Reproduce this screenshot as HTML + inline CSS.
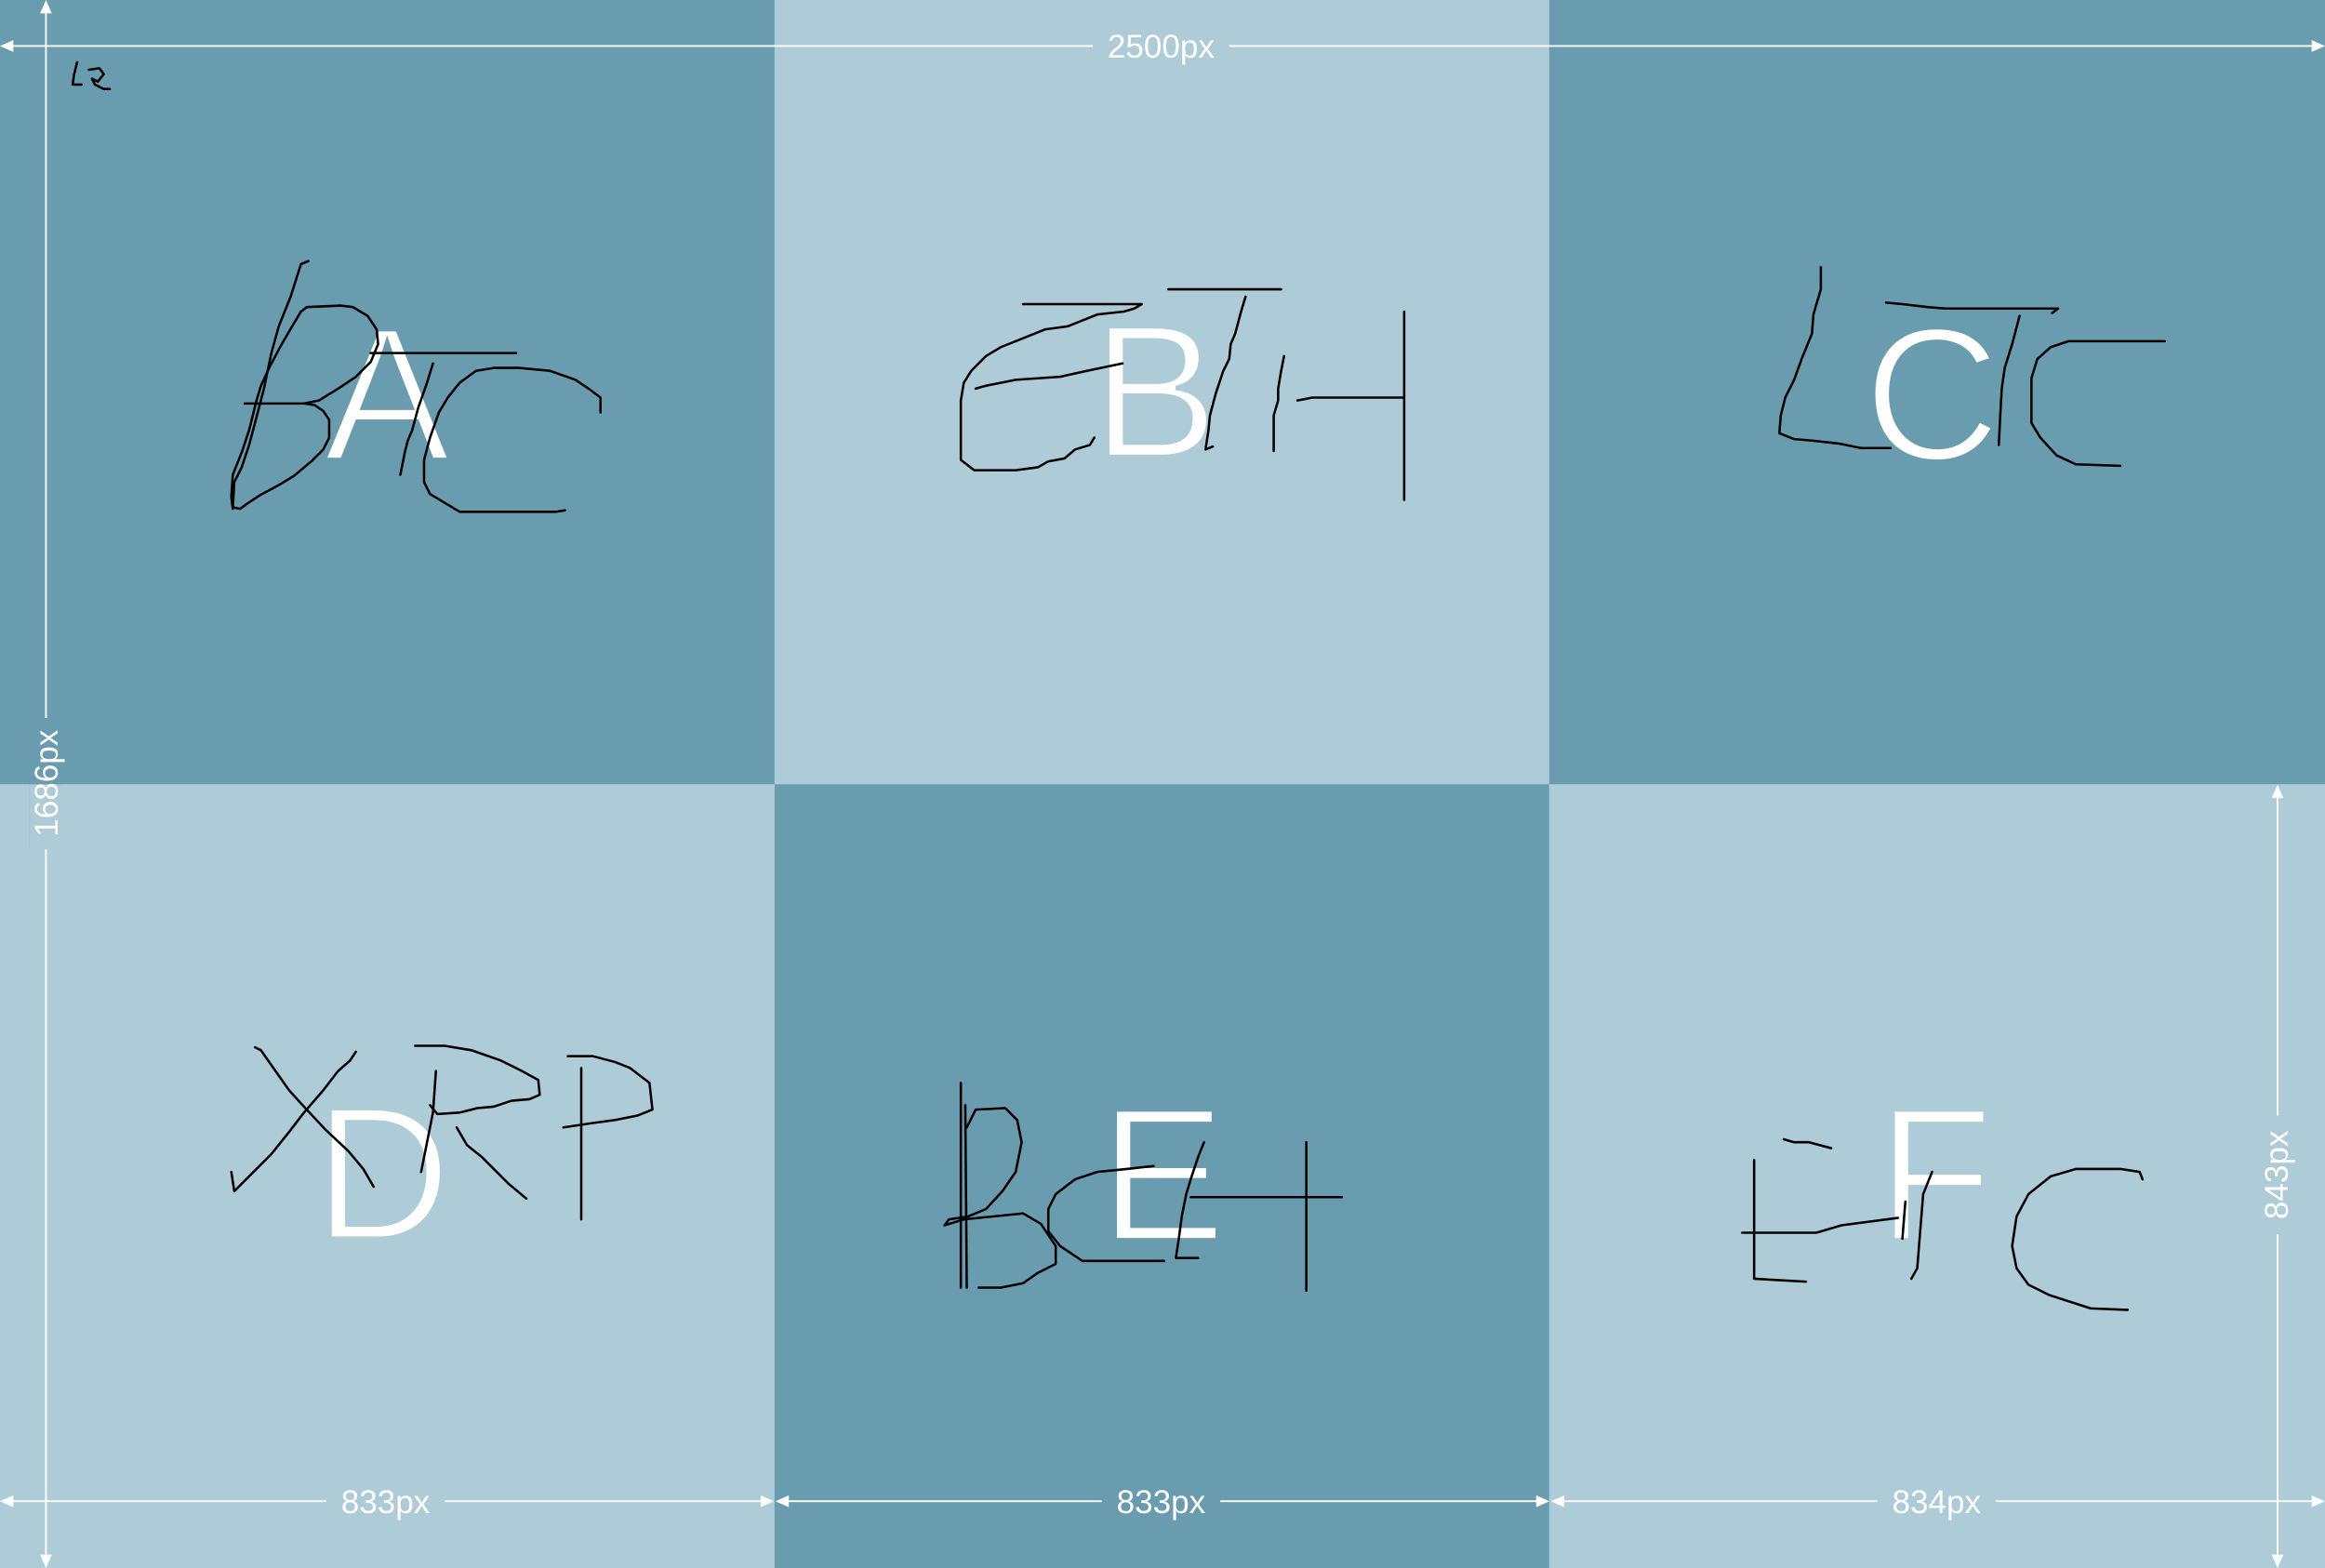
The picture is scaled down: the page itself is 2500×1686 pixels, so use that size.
<!DOCTYPE html>
<html><head><meta charset="utf-8"><style>
html,body{margin:0;padding:0;width:2500px;height:1686px;overflow:hidden;background:#aecbd8}
svg{display:block}
</style></head><body>
<svg width="2500" height="1686" viewBox="0 0 1568 1057" preserveAspectRatio="none" xmlns="http://www.w3.org/2000/svg">
<rect x="0" y="0" width="522.4" height="528.7" fill="#6a9caf"/>
<rect x="522.4" y="0" width="522.4" height="528.7" fill="#aecbd8"/>
<rect x="1044.8" y="0" width="523.2" height="528.7" fill="#6a9caf"/>
<rect x="0" y="528.7" width="522.4" height="528.3" fill="#aecbd8"/>
<rect x="522.4" y="528.7" width="522.4" height="528.3" fill="#6a9caf"/>
<rect x="1044.8" y="528.7" width="523.2" height="528.3" fill="#aecbd8"/>

<g font-family="Liberation Sans, sans-serif" font-size="128" fill="#fff" text-anchor="middle" font-weight="normal" stroke-width="3">
<text x="261" y="310" stroke="#6a9caf">A</text>
<text x="779" y="308" stroke="#aecbd8">B</text>
<text x="1303" y="310" stroke="#6a9caf">C</text>
<text x="258" y="835" stroke="#aecbd8">D</text>
<text x="784" y="836" stroke="#6a9caf">E</text>
<text x="1305" y="836" stroke="#aecbd8">F</text>
</g>

<g fill="none" stroke="#000" stroke-width="1.6" stroke-linejoin="round" stroke-linecap="round">
<path d="M52,42 L50,50 L49,57 L55,57 M60,47 L67,46 L70,50 L66,55 L62,53 L64,57 L70,60 L74,60"/>
<path d="M208,176 L203,178 L196,200 L188,220 L183,238 L178,262 L172,285 L168,300 L163,315 L158,325 L157,342 L162,343 L166,340 L175,334 L188,327 L198,321 L210,311 L218,303 L222,295 L222,283 L218,277 L212,273 L205,272 L165,272"/>
<path d="M205,272 L215,270 L228,262 L240,254 L250,244 L255,232 L254,222 L248,213 L238,207 L230,206 L207,207 L203,210 L197,220 L190,232 L182,247 L176,260 L173,270 L168,290 L163,305 L157,320 L156,335 L157,343"/>
<path d="M250,238 L348,238"/>
<path d="M292,245 L288,258 L282,275 L278,290 L275,297 L273,305 L270,320"/>
<path d="M405,278 L405,268 L397,262 L388,256 L371,250 L350,248 L333,248 L321,250 L310,258 L302,268 L296,278 L290,295 L286,310 L286,325 L290,333 L310,345 L375,345 L381,344"/>
<path d="M690,205 L770,205 L765,208 L758,210 L740,212 L720,220 L705,222 L690,228 L675,234 L665,240 L655,250 L650,258 L648,270 L648,310 L657,317 L685,317 L700,315 L707,311 L718,309 L725,303 L735,300 L738,295"/>
<path d="M658,262 L665,260 L685,256 L715,254 L733,250 L757,245"/>
<path d="M788,195 L864,195"/>
<path d="M840,200 L837,210 L833,225 L830,232 L829,242 L825,250 L820,265 L816,280 L815,290 L813,303 L818,301"/>
<path d="M866,240 L864,250 L862,262 L862,270 L859,280 L859,304"/>
<path d="M875,270 L885,268 L947,268 M947,210 L947,337"/>
<path d="M1228,180 L1228,195 L1223,212 L1222,225 L1215,242 L1210,256 L1204,268 L1201,280 L1200,292 L1210,296 L1222,297 L1240,299 L1255,302 L1275,302"/>
<path d="M1272,204 L1283,205 L1300,207 L1312,208 L1388,208 L1384,211"/>
<path d="M1362,213 L1357,232 L1352,248 L1350,262 L1349,280 L1348,300"/>
<path d="M1460,230 L1395,230 L1383,234 L1374,242 L1370,255 L1370,285 L1376,295 L1387,307 L1400,313 L1430,314"/>
<path d="M172,706 L176,708 L183,718 L195,735 L205,746 L220,762 L235,776 L245,788 L252,800"/>
<path d="M240,709 L236,715 L228,722 L218,735 L205,750 L195,763 L183,778 L170,791 L158,803 L156,790"/>
<path d="M280,705 L300,705 L318,708 L338,715 L352,722 L363,728 L364,738 L357,741 L345,742 L333,746 L322,747 L310,750 L295,751 L290,745"/>
<path d="M294,722 L292,750 L288,770 L284,790"/>
<path d="M308,760 L315,772 L325,780 L333,788 L343,798 L355,808"/>
<path d="M392,720 L392,822 M383,712 L400,712 L415,716 L425,720 L438,730 L440,748 L430,752 L415,755 L400,757 L380,760"/>
<path d="M648,730 L648,868 M651,745 L652,868"/>
<path d="M652,760 L658,748 L678,747 L686,755 L689,770 L685,790 L676,803 L665,815 L653,820 L640,822 L637,826 L650,822 L690,818 L702,825 L712,840 L712,852 L700,858 L690,865 L675,868 L660,868"/>
<path d="M778,786 L760,788 L740,790 L725,795 L712,805 L707,815 L707,830 L715,840 L730,850 L785,850"/>
<path d="M812,770 L808,780 L803,795 L800,805 L797,820 L795,835 L793,848 L808,848"/>
<path d="M803,807 L905,807 M881,770 L881,870"/>
<path d="M1203,768 L1210,770 L1220,770 L1235,774"/>
<path d="M1183,782 L1183,862 L1218,864"/>
<path d="M1175,831 L1225,831 L1242,826 L1280,821 M1285,810 L1283,835"/>
<path d="M1303,790 L1297,805 L1295,830 L1293,855 L1289,862"/>
<path d="M1445,795 L1443,790 L1430,788 L1400,788 L1383,793 L1368,805 L1360,820 L1357,840 L1360,855 L1368,866 L1382,873 L1410,882 L1435,883"/>
</g>

<g stroke="#fff" stroke-width="1.2" fill="none">
<line x1="2" y1="31" x2="1566" y2="31"/>
<line x1="31" y1="2" x2="31" y2="1055"/>
<line x1="2" y1="1012" x2="520" y2="1012"/>
<line x1="525" y1="1012" x2="1043" y2="1012"/>
<line x1="1047" y1="1012" x2="1566" y2="1012"/>
<line x1="1536" y1="531" x2="1536" y2="1055"/>
</g>
<g fill="#fff">
<path d="M0,31 L9,27 L9,35Z M1568,31 L1559,27 L1559,35Z"/>
<path d="M31,0 L27,9 L35,9Z M31,1057 L27,1048 L35,1048Z"/>
<path d="M0,1012 L9,1008 L9,1016Z M522,1012 L513,1008 L513,1016Z"/>
<path d="M523,1012 L532,1008 L532,1016Z M1045,1012 L1036,1008 L1036,1016Z"/>
<path d="M1046,1012 L1055,1008 L1055,1016Z M1568,1012 L1559,1008 L1559,1016Z"/>
<path d="M1536,529 L1532,538 L1540,538Z M1536,1057 L1532,1048 L1540,1048Z"/>
</g>
<g font-family="Liberation Sans, sans-serif" font-size="22" fill="#fff" text-anchor="middle">
<rect x="737" y="20" width="92" height="24" fill="#aecbd8"/>
<text x="783" y="39">2500px</text>
<rect x="20" y="484" width="22" height="88" fill="#6a9caf"/>
<rect x="20" y="528.7" width="22" height="44" fill="#aecbd8"/>
<text transform="translate(39,528) rotate(-90)">1686px</text>
<rect x="220" y="1001" width="80" height="24" fill="#aecbd8"/>
<text x="260" y="1020">833px</text>
<rect x="743" y="1001" width="80" height="24" fill="#6a9caf"/>
<text x="783" y="1020">833px</text>
<rect x="1266" y="1001" width="80" height="24" fill="#aecbd8"/>
<text x="1306" y="1020">834px</text>
<rect x="1525" y="752" width="22" height="80" fill="#aecbd8"/>
<text transform="translate(1543,792) rotate(-90)">843px</text>
</g>
</svg>
</body></html>
